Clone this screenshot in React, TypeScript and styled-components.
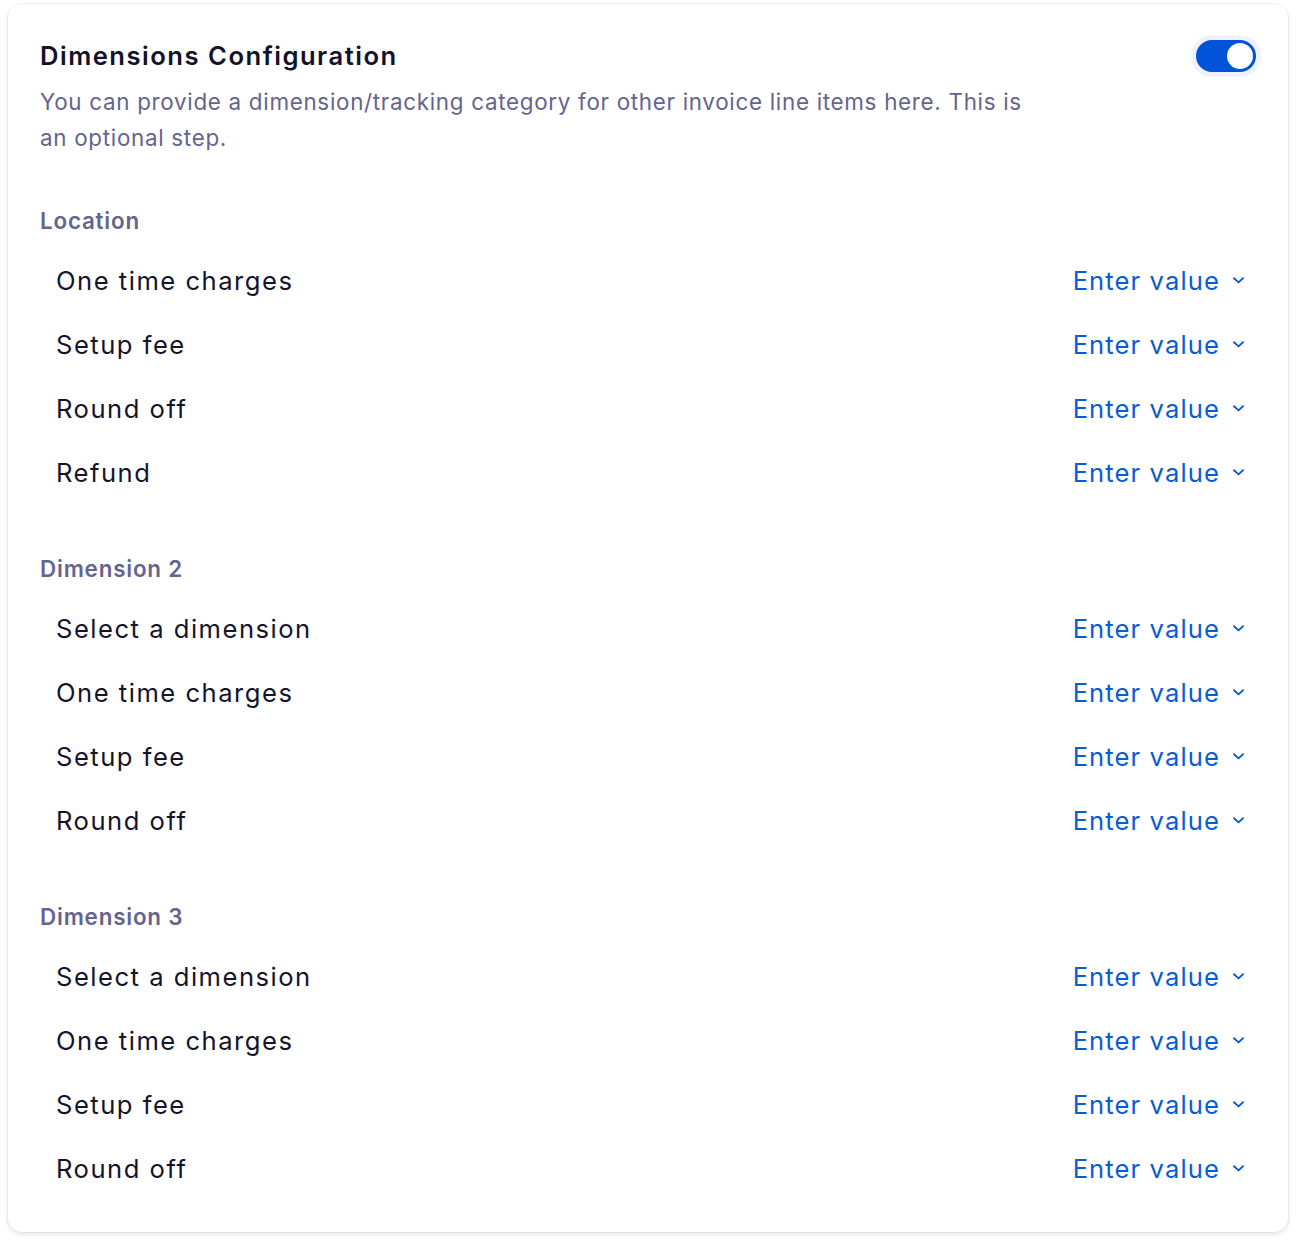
import React, { useState } from "react";
import styled, { createGlobalStyle } from "styled-components";

const GlobalStyle = createGlobalStyle`
  html, body { margin: 0; padding: 0; background: #ffffff; }
  body { font-family: Inter, "Noto Sans", "Liberation Sans", sans-serif; -webkit-font-smoothing: antialiased; }
  #root { padding: 4px 8px 8px; }
  * { box-sizing: border-box; }
`;

const Card = styled.section`
  width: 1280px;
  background: #ffffff;
  border-radius: 14px;
  box-shadow: 0 0 0 1px rgba(20, 20, 60, 0.04), 0 2px 5px rgba(20, 20, 60, 0.12);
  padding: 32px 32px 32px 32px;
  display: flex;
  flex-direction: column;
`;

const Header = styled.div`
  display: flex;
  align-items: flex-start;
  justify-content: space-between;
`;

const HeaderText = styled.div`
  display: flex;
  flex-direction: column;
  gap: 8px;
`;

const Title = styled.h2`
  margin: 0;
  font-size: 25.6px;
  line-height: 40px;
  font-weight: 600;
  color: #12122b;
  letter-spacing: 1.5px;
`;

const Description = styled.p`
  margin: 0;
  max-width: 1000px;
  font-size: 22.4px;
  line-height: 36px;
  color: #64648f;
  letter-spacing: 0.7px;
`;

const ToggleButton = styled.button<{ $on: boolean }>`
  margin-top: 4px;
  width: 60px;
  height: 32px;
  border: none;
  border-radius: 16px;
  padding: 3px;
  cursor: pointer;
  display: flex;
  justify-content: ${(p) => (p.$on ? "flex-end" : "flex-start")};
  background: ${(p) => (p.$on ? "#0052d6" : "#d0d0dc")};
  box-shadow: 0 0 0 5px #eef2fb;
`;

const Knob = styled.span`
  width: 26px;
  height: 26px;
  border-radius: 50%;
  background: #ffffff;
`;

const Sections = styled.div`
  display: flex;
  flex-direction: column;
  gap: 48px;
  margin-top: 48px;
`;

const Section = styled.div`
  display: flex;
  flex-direction: column;
`;

const SectionTitle = styled.h3`
  margin: 0 0 10px;
  font-size: 22.4px;
  line-height: 34px;
  font-weight: 600;
  color: #64648f;
  letter-spacing: 0.8px;
`;

const Row = styled.div`
  height: 64px;
  display: flex;
  align-items: center;
  justify-content: space-between;
  padding: 0 12px 0 16px;
`;

const RowLabel = styled.span`
  font-size: 25.6px;
  color: #14142b;
  letter-spacing: 1.5px;
`;

const ValueTrigger = styled.button`
  display: flex;
  align-items: center;
  gap: 13px;
  background: none;
  border: none;
  padding: 0;
  cursor: pointer;
  font-family: inherit;
  font-size: 25.6px;
  color: #0a5bd6;
  letter-spacing: 1.1px;
`;

const Chevron = () => (
  <svg width="11" height="7" viewBox="0 0 11 7" fill="none">
    <path d="M1 1.2 L5.5 5.4 L10 1.2" stroke="#0a5bd6" strokeWidth="1.9" strokeLinecap="round" strokeLinejoin="round" />
  </svg>
);

const sections = [
  { title: "Location", rows: ["One time charges", "Setup fee", "Round off", "Refund"] },
  { title: "Dimension 2", rows: ["Select a dimension", "One time charges", "Setup fee", "Round off"] },
  { title: "Dimension 3", rows: ["Select a dimension", "One time charges", "Setup fee", "Round off"] },
];

export default function App() {
  const [on, setOn] = useState(true);
  return (
    <>
      <GlobalStyle />
      <Card>
        <Header>
          <HeaderText>
            <Title>Dimensions Configuration</Title>
            <Description>
              You can provide a dimension/tracking category for other invoice line items here. This is an optional step.
            </Description>
          </HeaderText>
          <ToggleButton $on={on} onClick={() => setOn(!on)} aria-label="toggle">
            <Knob />
          </ToggleButton>
        </Header>
        <Sections>
          {sections.map((s) => (
            <Section key={s.title}>
              <SectionTitle>{s.title}</SectionTitle>
              {s.rows.map((r, i) => (
                <Row key={i}>
                  <RowLabel>{r}</RowLabel>
                  <ValueTrigger>
                    Enter value
                    <Chevron />
                  </ValueTrigger>
                </Row>
              ))}
            </Section>
          ))}
        </Sections>
      </Card>
    </>
  );
}
